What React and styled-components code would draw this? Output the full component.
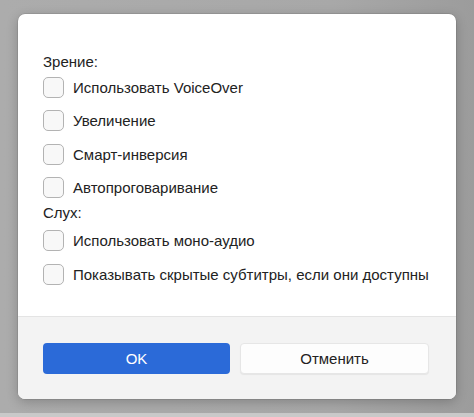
import React from 'react'
import styled, { createGlobalStyle } from 'styled-components'

const GlobalStyle = createGlobalStyle`
  html, body {
    margin: 0;
    padding: 0;
    background: #aaaaaa;
    font-family: "Liberation Sans", Arial, sans-serif;
  }
`

const Page = styled.div`
  width: 474px;
  height: 417px;
  padding: 14px 0 0 18px;
  box-sizing: border-box;
  border-bottom: 4px solid #c9c9c9;
  background: linear-gradient(90deg, #acacac 0%, #a8a8a8 70%, #9c9c9c 100%);
`

const Dialog = styled.div`
  width: 438px;
  height: 385px;
  display: flex;
  flex-direction: column;
  background: #ffffff;
  border-radius: 7px;
  overflow: hidden;
  box-shadow: 0 3px 12px rgba(0, 0, 0, 0.22), 0 0 0 0.5px rgba(0, 0, 0, 0.15);
`

const Body = styled.div`
  flex: 1;
  padding: 39px 25px 0;
`

const Heading = styled.div`
  height: 18px;
  line-height: 18px;
  font-size: 15px;
  color: #222;
  margin-bottom: ${(p) => p.$gap || 0}px;
`

const Row = styled.label`
  display: flex;
  align-items: center;
  gap: 9px;
  height: 33.3px;
  font-size: 15px;
  color: #222;
`

const Box = styled.span`
  width: 19px;
  height: 19px;
  flex: none;
  border: 1px solid #b3b3b3;
  border-radius: 5px;
  background: #f8f8f8;
`

const Footer = styled.div`
  display: flex;
  gap: 10px;
  padding: 26px 27px 25px 25px;
  background: #f3f3f3;
  border-top: 1px solid #e4e4e4;
`

const Button = styled.button`
  flex: 1;
  height: 31px;
  border-radius: 4px;
  font-family: inherit;
  font-size: 15px;
  border: ${(p) => (p.$primary ? 'none' : '1px solid #e6e6e6')};
  background: ${(p) => (p.$primary ? '#2b6ad8' : '#fdfdfd')};
  color: ${(p) => (p.$primary ? '#ffffff' : '#222')};
  box-shadow: ${(p) => (p.$primary ? 'none' : '0 1px 1px rgba(0,0,0,0.06)')};
`

const Check = ({ children }) => (
  <Row>
    <Box />
    {children}
  </Row>
)

export default function App() {
  return (
    <>
      <GlobalStyle />
      <Page>
        <Dialog>
          <Body>
            <Heading>Зрение:</Heading>
            <Check>Использовать VoiceOver</Check>
            <Check>Увеличение</Check>
            <Check>Смарт-инверсия</Check>
            <Check>Автопроговаривание</Check>
            <Heading $gap={2}>Слух:</Heading>
            <Check>Использовать моно-аудио</Check>
            <Check>Показывать скрытые субтитры, если они доступны</Check>
          </Body>
          <Footer>
            <Button $primary>OK</Button>
            <Button>Отменить</Button>
          </Footer>
        </Dialog>
      </Page>
    </>
  )
}
